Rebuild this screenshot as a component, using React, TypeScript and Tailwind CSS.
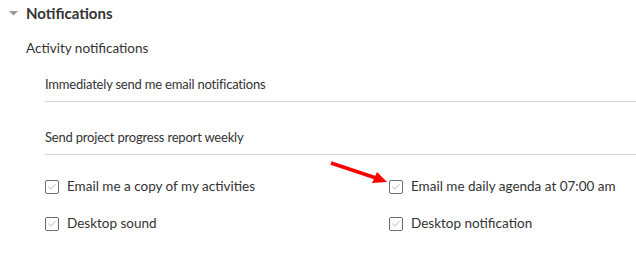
import { Check } from 'lucide-react'

function Box({ label }: { label: string }) {
  return (
    <label className="flex h-[37px] items-center">
      <span className="flex h-[14px] w-[14px] items-center justify-center rounded-[2px] border border-[#707070] bg-white">
        <Check size={10} strokeWidth={1.5} className="text-[#888]" />
      </span>
      <span className="ml-2 text-[13.5px] text-[#333]">{label}</span>
    </label>
  )
}

export default function App() {
  return (
    <div className="h-[256px] w-[636px] overflow-hidden bg-white font-['Lato',sans-serif] text-[#333]">
      <div className="flex h-[27px] items-center pl-[9px]">
        <svg width="9" height="5" viewBox="0 0 9 5" className="mr-[8px]">
          <path d="M0 0h9L4.5 4.5z" fill="#999" />
        </svg>
        <h2 className="text-[15px] font-bold text-[#333]">Notifications</h2>
      </div>
      <div className="pl-[26px]">
        <div className="flex h-[42px] items-center text-[13.5px]">Activity notifications</div>
        <div className="pl-[19px]">
          <div className="flex h-[33px] items-center border-b border-[#d4d4d4] text-[13px] tracking-[-0.2px]">
            Immediately send me email notifications
          </div>
          <div className="flex h-[53px] items-center border-b border-[#d4d4d4] pt-[19px] text-[13px] tracking-[-0.2px]">
            Send project progress report weekly
          </div>
          <div className="relative mt-[13px] grid grid-cols-[344px_1fr]">
            <Box label="Email me a copy of my activities" />
            <Box label="Email me daily agenda at 07:00 am" />
            <Box label="Desktop sound" />
            <Box label="Desktop notification" />
            <svg width="62" height="26" viewBox="0 0 62 26" className="absolute left-[285px] top-[-7px]">
              <line x1="1" y1="2" x2="46" y2="17" stroke="#f00" strokeWidth="3.5" />
              <path d="M57 21L42 22L47 11z" fill="#f00" />
            </svg>
          </div>
        </div>
      </div>
    </div>
  )
}
